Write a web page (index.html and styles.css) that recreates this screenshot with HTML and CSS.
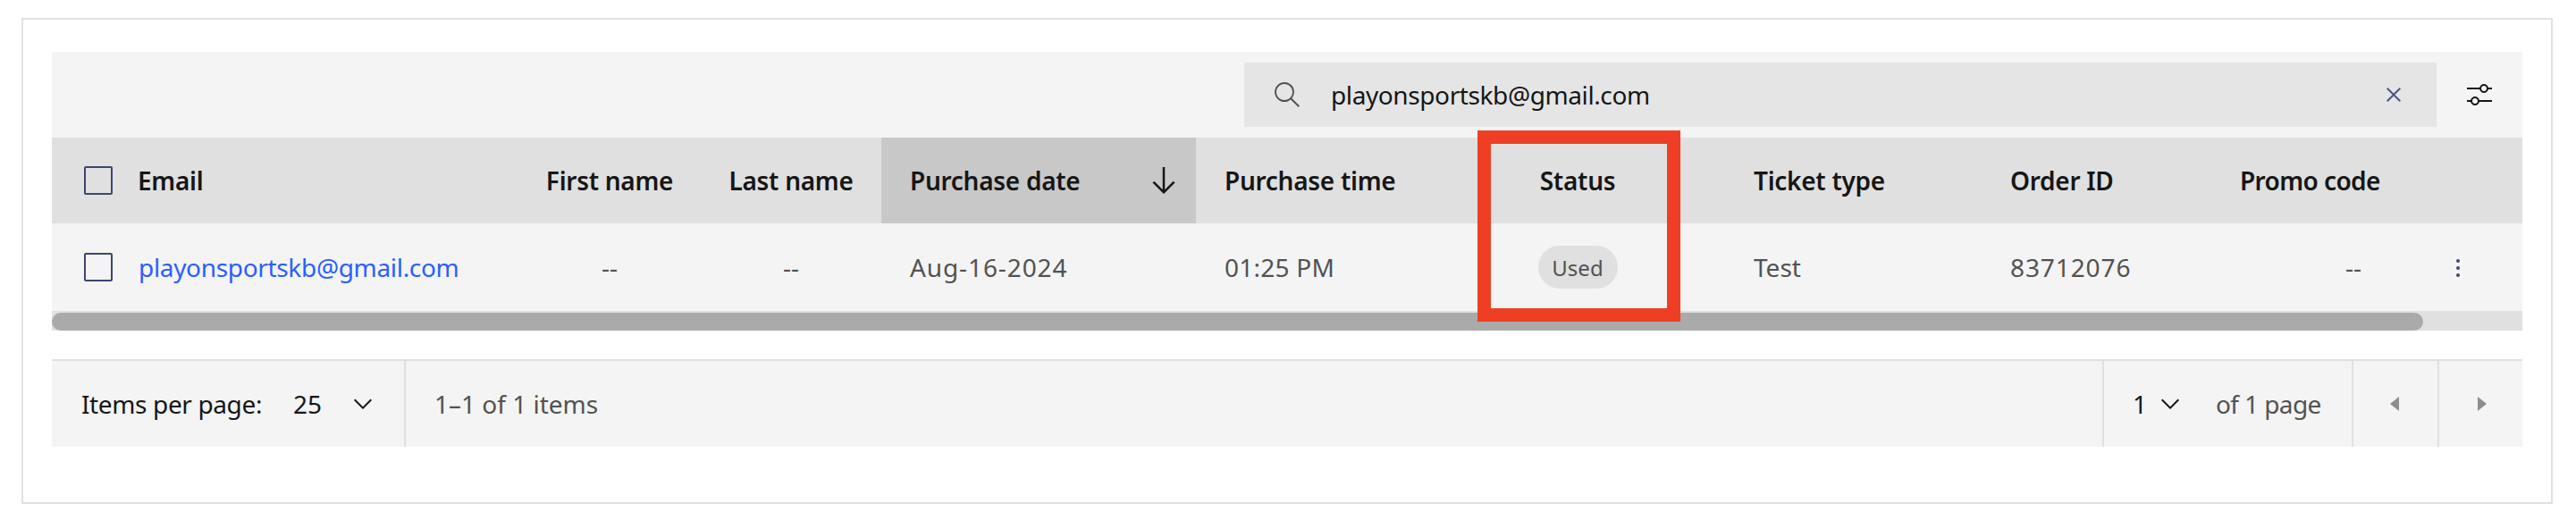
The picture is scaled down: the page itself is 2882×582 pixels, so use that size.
FILE: index.html
```html
<!DOCTYPE html>
<html lang="en">
<head>
<meta charset="utf-8">
<title>Orders</title>
<link rel="stylesheet" href="styles.css">
</head>
<body>
<main class="frame">
  <div class="toolbar">
    <div class="search">
      <svg class="icon search-icon" viewBox="0 0 16 16"><path d="M15,14.3L10.7,10c1.9-2.3,1.6-5.8-0.7-7.7S4.2,0.7,2.3,3S0.7,8.8,3,10.7c2,1.7,5,1.7,7,0l4.3,4.3L15,14.3z M2,6.5C2,4,4,2,6.5,2S11,4,11,6.5S9,11,6.5,11S2,9,2,6.5z"/></svg>
      <span class="search-text">playonsportskb@gmail.com</span>
      <svg class="icon close-icon" viewBox="0 0 32 32"><path d="M24 9.4L22.6 8 16 14.6 9.4 8 8 9.4 14.6 16 8 22.6 9.4 24 16 17.4 22.6 24 24 22.6 17.4 16 24 9.4z"/></svg>
    </div>
    <svg class="icon adjust-icon" viewBox="0 0 32 32"><path d="M30 8h-4.1c-.5-2.3-2.5-4-4.9-4s-4.4 1.7-4.9 4H2v2h14.1c.5 2.3 2.5 4 4.9 4s4.4-1.7 4.9-4H30V8zm-9 4c-1.7 0-3-1.3-3-3s1.3-3 3-3 3 1.3 3 3-1.3 3-3 3zM2 24h4.1c.5 2.3 2.5 4 4.9 4s4.4-1.7 4.9-4H30v-2H15.9c-.5-2.3-2.5-4-4.9-4s-4.4 1.7-4.9 4H2v2zm9-4c1.7 0 3 1.3 3 3s-1.3 3-3 3-3-1.3-3-3 1.3-3 3-3z"/></svg>
  </div>

  <table class="grid">
    <colgroup>
      <col class="c-email"><col class="c-first"><col class="c-last"><col class="c-date"><col class="c-time"><col class="c-status"><col class="c-ticket"><col class="c-order"><col class="c-promo">
    </colgroup>
    <thead>
      <tr>
        <th class="cell-email"><span class="select select-head"><span class="check"></span><span>Email</span></span></th>
        <th class="center">First name</th>
        <th class="center">Last name</th>
        <th class="sorted"><span class="sort-wrap"><span>Purchase date</span><svg class="arrow" viewBox="0 0 32 32"><path d="M24.59 16.59L17 24.17 17 4 15 4 15 24.17 7.41 16.59 6 18 16 28 26 18 24.59 16.59z"/></svg></span></th>
        <th>Purchase time</th>
        <th class="center">Status</th>
        <th class="cell-ticket">Ticket type</th>
        <th>Order ID</th>
        <th class="head-promo">Promo code</th>
      </tr>
    </thead>
    <tbody>
      <tr>
        <td class="cell-email"><span class="select"><span class="check"></span><a class="link" href="#">playonsportskb@gmail.com</a></span></td>
        <td class="center">--</td>
        <td class="center">--</td>
        <td class="num">Aug-16-2024</td>
        <td class="num-time">01:25 PM</td>
        <td class="center"><span class="tag">Used</span></td>
        <td class="cell-ticket">Test</td>
        <td class="num">83712076</td>
        <td class="cell-promo"><span class="promo-dash">--</span>
          <svg class="icon kebab" viewBox="0 0 32 32"><circle cx="16" cy="8" r="2"/><circle cx="16" cy="16" r="2"/><circle cx="16" cy="24" r="2"/></svg>
        </td>
      </tr>
    </tbody>
  </table>

  <div class="scroll-track"><div class="scroll-thumb"></div></div>

  <footer class="pager">
    <div class="pager-size">
      <span class="pager-label">Items per page:</span>
      <span class="pager-value">25</span>
      <svg class="icon chevron" viewBox="0 0 32 32"><path d="M16 22L6 12 7.4 10.6 16 19.2 24.6 10.6 26 12z"/></svg>
    </div>
    <div class="pager-range">1–1 of 1 items</div>
    <div class="pager-page">
      <span class="pager-value page-num">1</span>
      <svg class="icon chevron" viewBox="0 0 32 32"><path d="M16 22L6 12 7.4 10.6 16 19.2 24.6 10.6 26 12z"/></svg>
      <span class="pager-of">of 1 page</span>
    </div>
    <div class="pager-btn"><svg class="icon caret" viewBox="0 0 32 32"><path d="M20 24L10 16 20 8z"/></svg></div>
    <div class="pager-btn pager-btn-last"><svg class="icon caret" viewBox="0 0 32 32"><path d="M12 8L22 16 12 24z"/></svg></div>
  </footer>

  <div class="highlight"></div>
</main>
</body>
</html>
```
FILE: styles.css
```css
* { box-sizing: border-box; }

html, body {
  margin: 0;
  padding: 0;
  background: #ffffff;
}

body {
  font-family: "Noto Sans", "Liberation Sans", sans-serif;
  font-size: 28px;
  color: #161616;
  padding: 20px 26px 18px 24px;
}

.frame {
  position: relative;
  width: 2832px;
  height: 544px;
  border: 2px solid #e0e0e0;
  padding: 36px 32px 0 32px;
}

.icon {
  display: block;
  width: 32px;
  height: 32px;
  flex: none;
}

/* toolbar */
.toolbar {
  display: flex;
  align-items: center;
  justify-content: flex-end;
  gap: 32px;
  height: 96px;
  padding-right: 32px;
  background: #f4f4f4;
}

.search {
  display: flex;
  align-items: center;
  width: 1334px;
  height: 72px;
  padding: 0 32px;
  background: #e5e5e5;
}

.search-icon { fill: #525252; }

.search-text {
  flex: 1;
  margin-left: 33px;
  color: #161616;
  letter-spacing: -0.4px;
}

.close-icon { fill: #4a5585; }

.adjust-icon { fill: #161616; }

/* table */
.grid {
  width: 2764px;
  table-layout: fixed;
  border-collapse: collapse;
}

.c-email { width: 522px; }
.c-first { width: 204px; }
.c-last { width: 202px; }
.c-date { width: 352px; }
.c-time { width: 261px; }
.c-status { width: 332px; }
.c-ticket { width: 286px; }
.c-order { width: 257px; }
.c-promo { width: 348px; }

th, td {
  padding: 0 32px;
  text-align: left;
  vertical-align: middle;
  white-space: nowrap;
  font-size: 28px;
}

th {
  height: 96px;
  background: #e0e0e0;
  color: #161616;
  font-weight: 600;
  letter-spacing: -0.28px;
}

th.head-promo { letter-spacing: -0.6px; }

td {
  height: 98px;
  background: #f4f4f4;
  color: #525252;
  font-weight: 400;
}

td.num { letter-spacing: 0.9px; }
td.num-time { letter-spacing: 0.25px; }

th.center, td.center { padding: 0; text-align: center; }

th.sorted { background: #c8c8c8; padding-right: 16px; }

th.cell-ticket, td.cell-ticket { padding-left: 31px; }

.sort-wrap {
  display: flex;
  align-items: center;
  justify-content: space-between;
}

.arrow {
  display: block;
  width: 40px;
  height: 40px;
  fill: #161616;
}

.cell-email { padding-left: 36px; }

.select {
  display: flex;
  align-items: center;
  gap: 29px;
}

.select-head { gap: 28px; }

.check {
  flex: none;
  width: 32px;
  height: 32px;
  border: 2px solid #3d4570;
  border-radius: 2px;
}

.link {
  color: #2a5fff;
  text-decoration: none;
  letter-spacing: -0.33px;
}

.tag {
  display: inline-flex;
  align-items: center;
  justify-content: center;
  width: 89px;
  height: 48px;
  border-radius: 24px;
  background: #e0e0e0;
  color: #525252;
  font-size: 24px;
}

.cell-promo {
  position: relative;
  padding: 0 30px 0 0;
  text-align: center;
}

.promo-dash { display: block; }

.kebab {
  position: absolute;
  right: 56px;
  top: 34px;
  fill: #3d4570;
}

/* scrollbar */
.scroll-track {
  height: 22px;
  padding-top: 2px;
  background: #e0e0e0;
}

.scroll-thumb {
  width: 2653px;
  height: 20px;
  border-radius: 10px;
  background: #aaaaaa;
}

/* pagination */
.pager {
  display: flex;
  align-items: stretch;
  height: 98px;
  margin-top: 32px;
  border-top: 2px solid #e0e0e0;
  background: #f4f4f4;
  font-size: 28px;
}

.pager-size {
  display: flex;
  align-items: center;
  width: 396px;
  padding-left: 33px;
  border-right: 2px solid #e0e0e0;
}

.pager-label { color: #161616; letter-spacing: -0.37px; }

.pager-value { color: #161616; margin-left: 35px; }

.pager-size .chevron { margin-left: 30px; fill: #161616; }

.pager-range {
  display: flex;
  align-items: center;
  flex: 1;
  padding-left: 32px;
  color: #525252;
}

.pager-page {
  display: flex;
  align-items: center;
  width: 279px;
  padding-left: 32px;
  border-left: 2px solid #e0e0e0;
}

.page-num { margin-left: 0; }

.pager-page .chevron { margin-left: 10px; fill: #161616; }

.pager-of { margin-left: 35px; color: #525252; letter-spacing: -0.6px; }

.pager-btn {
  display: flex;
  align-items: center;
  justify-content: center;
  width: 96px;
  border-left: 2px solid #e0e0e0;
}

.pager-btn-last { width: 95px; }

.caret { fill: #8d8d8d; }

/* annotation overlay */
.highlight {
  position: absolute;
  left: 1627px;
  top: 124px;
  width: 227px;
  height: 214px;
  border: 15px solid #ee3f24;
}
```
